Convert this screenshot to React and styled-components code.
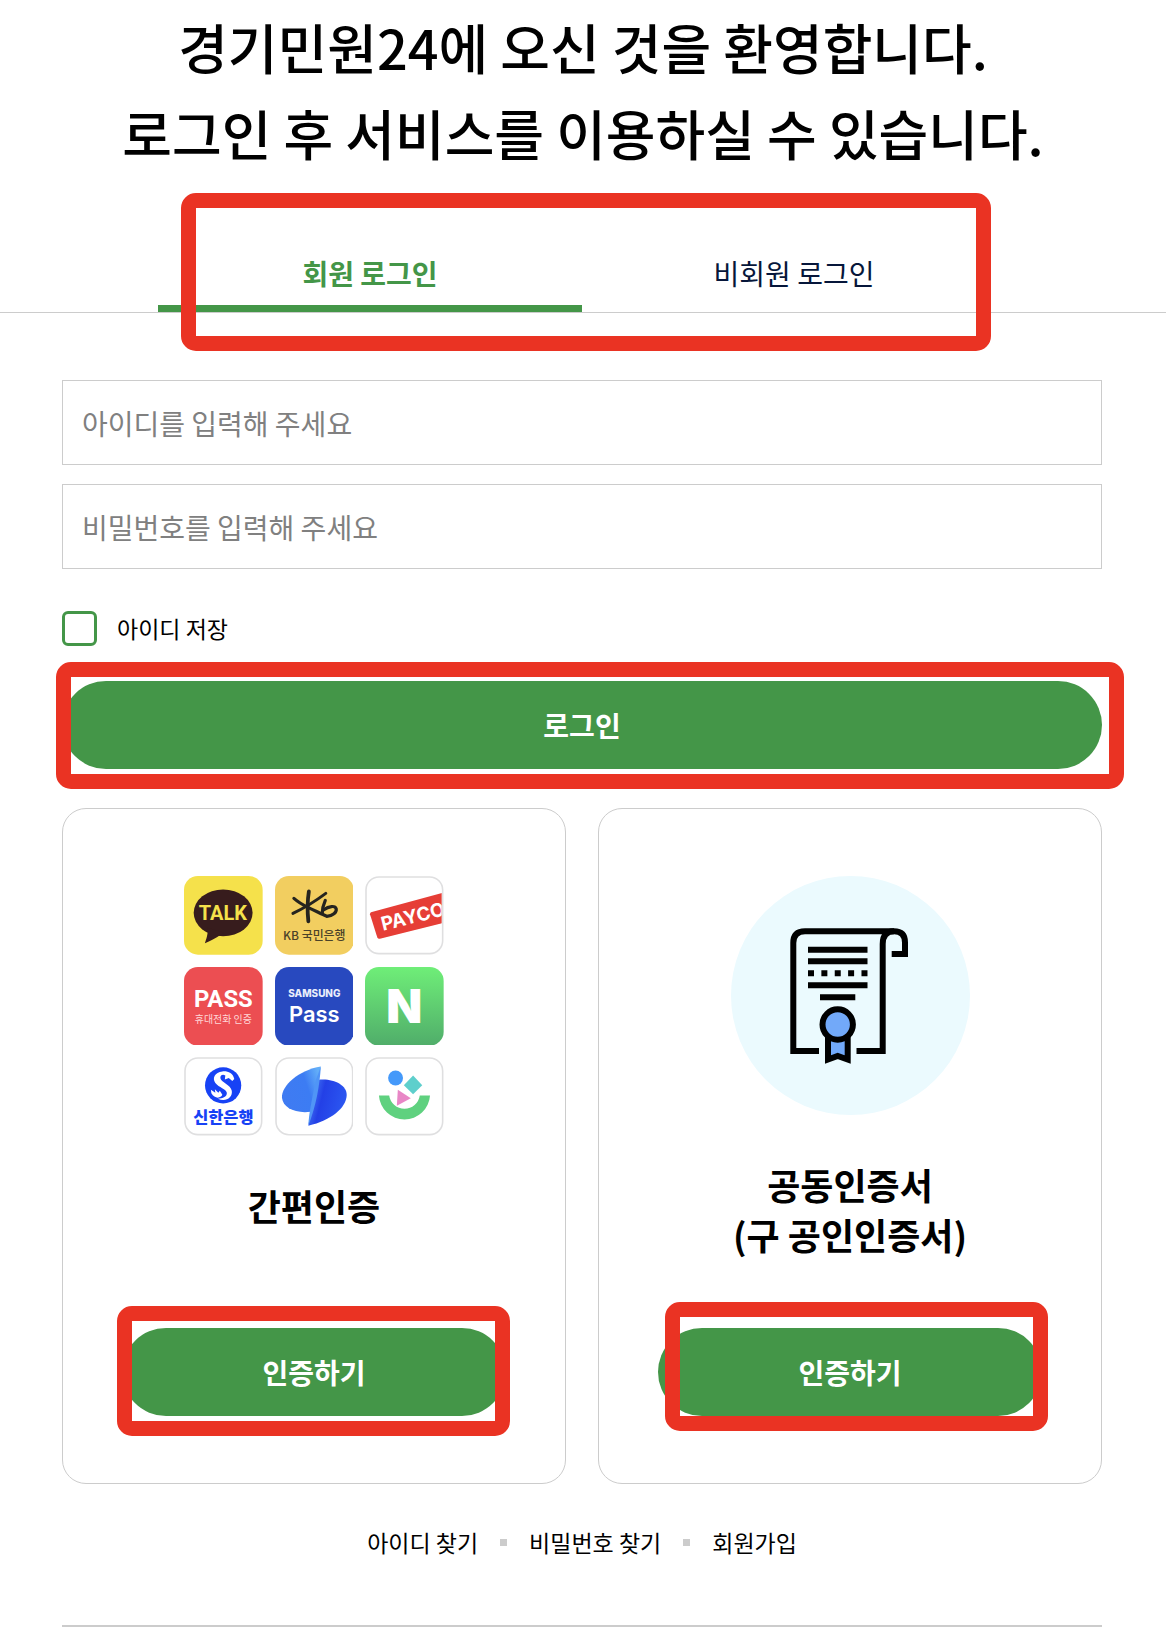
import React, { useState } from 'react';
import styled, { createGlobalStyle } from 'styled-components';

const GlobalStyle = createGlobalStyle`
  * {
    box-sizing: border-box;
  }

  body {
    margin: 0;
    background: #ffffff;
    color: #000000;
    font-family: "Noto Sans CJK KR", sans-serif;
  }

  button,
  input {
    font-family: inherit;
  }
`;

const Page = styled.main`
  padding-top: 4px;
`;

const Title = styled.h1`
  margin: 0 0 56px;
  font-size: 54px;
  font-weight: 500;
  line-height: 86px;
  text-align: center;
`;

const TabBar = styled.div`
  padding: 0 160px 0 158px;
  border-bottom: 1px solid #cccccc;
`;

const Tabs = styled.div`
  position: relative;
  display: flex;
`;

const Tab = styled.button`
  flex: 1;
  height: 80px;
  padding: 8px 0 0;
  border: none;
  border-bottom: 7px solid ${({ $active }) => ($active ? '#449648' : 'transparent')};
  background: none;
  color: ${({ $active }) => ($active ? '#449648' : '#06163a')};
  font-size: 28px;
  font-weight: ${({ $active }) => ($active ? 700 : 400)};
`;

const Marker = styled.span`
  position: absolute;
  z-index: 1;
  inset: ${({ $inset }) => $inset};
  border: 15px solid #ea3323;
  border-radius: 15px;
  pointer-events: none;
`;

const Content = styled.div`
  padding: 67px 64px 0 62px;
`;

const Fields = styled.form`
  display: flex;
  flex-direction: column;
  gap: 19px;
`;

const Field = styled.input`
  width: 100%;
  height: 85px;
  padding: 0 19px;
  border: 1px solid #cccccc;
  border-radius: 0;
  font-size: 28px;

  &::placeholder {
    color: #808080;
  }
`;

const SaveId = styled.label`
  display: flex;
  align-items: center;
  gap: 20px;
  margin: 23px 0 16px;
  font-size: 23px;
  line-height: 35px;
`;

const Checkbox = styled.input`
  appearance: none;
  width: 35px;
  height: 35px;
  margin: 0;
  border: 3px solid #449648;
  border-radius: 6px;

  &:checked {
    background: #449648;
  }
`;

const ButtonWrap = styled.div`
  position: relative;
  margin-top: auto;
`;

const Button = styled.button`
  display: block;
  width: 100%;
  height: 88px;
  border: none;
  border-radius: 44px;
  background: #449648;
  color: #ffffff;
  font-size: 28px;
  font-weight: 700;
`;

const Cards = styled.div`
  display: grid;
  grid-template-columns: 1fr 1fr;
  gap: 32px;
  margin-top: 39px;
`;

const Card = styled.section`
  display: flex;
  flex-direction: column;
  min-height: 676px;
  padding: 67px 59px;
  border: 1px solid #cccccc;
  border-radius: 24px;
`;

const CardTitle = styled.h2`
  margin: 44px 0 40px;
  font-size: 36px;
  font-weight: 700;
  line-height: 50px;
  text-align: center;
`;

const AppGrid = styled.div`
  display: grid;
  grid-template-columns: repeat(3, 1fr);
  gap: 12px;
  width: 260px;
  margin: 0 auto;

  svg {
    display: block;
    width: 100%;
  }
`;

const Certificate = styled.svg`
  display: block;
  width: 239px;
  height: 239px;
  margin: 0 auto;
`;

const Links = styled.nav`
  display: flex;
  justify-content: center;
  align-items: center;
  gap: 22px;
  margin: 41px 0 65px;
  line-height: 35px;
`;

const Link = styled.a`
  color: #000000;
  font-size: 23px;
  text-decoration: none;
`;

const Dot = styled.span`
  width: 7px;
  height: 7px;
  background: #cccccc;
`;

const Divider = styled.hr`
  margin: 0;
  border: none;
  border-top: 2px solid #cccccc;
`;

const Tile = ({ fill, outlined, children }) => (
  <svg viewBox="0 0 79 79" aria-hidden="true">
    {outlined
      ? <rect x="1" y="1" width="77" height="77" rx="13" fill="#ffffff" stroke="#dfdfe0" strokeWidth="1.6" />
      : <rect width="79" height="79" rx="14" fill={fill} />}
    {children}
  </svg>
);

const TalkIcon = () => (
  <Tile fill="#f5e14b">
    <ellipse cx="39.3" cy="37" rx="29.6" ry="23.5" fill="#371c1d" />
    <path d="M24 52 C24 59 22.5 63 21 67.5 C29 64 34 61 40 57 Z" fill="#371c1d" />
    <text x="39" y="44.5" textAnchor="middle" fontFamily="Roboto, sans-serif" fontWeight="700" fontSize="20" fill="#f5e14b">TALK</text>
  </Tile>
);

const KbIcon = () => (
  <Tile fill="#f2ce60">
    <g fill="none" stroke="#25241f" strokeLinecap="round">
      <path d="M34 15.5 C32.5 25 32.5 36 33.5 45.5" strokeWidth="3.8" />
      <path d="M51 17.5 C41 25 30 32 18 37.5" strokeWidth="3" />
      <path d="M19 22.5 C24 27 28 29 33 31.5 C40 34.5 46 38 52 40.5 C58 40 62 36.5 61.5 33 C60.5 29.5 54 30 49 34" strokeWidth="3.2" />
      <path d="M50.5 24.5 C48.5 29 47.5 33 47.5 37" strokeWidth="3.2" />
    </g>
    <text x="39.5" y="64" textAnchor="middle" fontFamily="Noto Sans CJK KR, sans-serif" fontWeight="500" fontSize="12" fill="#4b4229">KB 국민은행</text>
  </Tile>
);

const PaycoIcon = () => (
  <Tile outlined>
    <clipPath id="payco">
      <rect x="2" y="2" width="75" height="75" rx="12" />
    </clipPath>
    <g clipPath="url(#payco)">
      <path d="M6 36.5 L79 16.5 V47 L15 63 Q13 63.3 12.3 61.5 L5 38.5 Q5 37 6 36.5 Z" fill="#e63e36" />
      <text x="18" y="55" transform="rotate(-14 18 55)" fontFamily="Inter, sans-serif" fontWeight="700" fontSize="19" fill="#ffffff">PAYCO</text>
    </g>
  </Tile>
);

const PassIcon = () => (
  <Tile fill="#ec4e52">
    <text x="39.5" y="40" textAnchor="middle" fontFamily="Roboto, sans-serif" fontWeight="700" fontSize="24" fill="#ffffff">PASS</text>
    <text x="39.5" y="56" textAnchor="middle" fontFamily="Noto Sans CJK KR, sans-serif" fontSize="10" fill="#ffd8d8">휴대전화 인증</text>
  </Tile>
);

const SamsungIcon = () => (
  <Tile fill="#2849bf">
    <text x="39.5" y="30" textAnchor="middle" fontFamily="Inter, sans-serif" fontWeight="800" fontSize="10" fill="#e9edfb">SAMSUNG</text>
    <text x="39.5" y="55" textAnchor="middle" fontFamily="Inter, sans-serif" fontWeight="600" fontSize="22" fill="#ffffff">Pass</text>
  </Tile>
);

const NaverIcon = () => (
  <Tile fill="url(#naver)">
    <linearGradient id="naver" x1="0" y1="0" x2="0" y2="1">
      <stop offset="0" stopColor="#6fee78" />
      <stop offset="1" stopColor="#50ad6a" />
    </linearGradient>
    <text x="39.5" y="56" textAnchor="middle" fontFamily="Inter, sans-serif" fontWeight="900" fontSize="47" fill="#ffffff">N</text>
  </Tile>
);

const ShinhanIcon = () => (
  <Tile outlined>
    <circle cx="39.3" cy="28.5" r="18.2" fill="#1742f5" />
    <path d="M50.5 22 C49 16 44 14 38.5 14.5 C31 15.5 28 21 31.5 26 C35 30.5 42.5 32 43 36 C43.5 39.5 39 42 34 42 C42 45.5 49 41 48 34 C47 27.5 37 25.5 36.5 21 C36.5 18 39 17 41.5 18.5 L41 22.5 L45 21 L48.5 24 Z" fill="#ffffff" />
    <path d="M27 33 L31.5 36 L31 32.5 L34.5 36 L36 34 L38.5 38 C37 41.5 31 42.5 27.5 36.5 Z" fill="#ffffff" />
    <text x="39.5" y="66" textAnchor="middle" fontFamily="Noto Sans CJK KR, sans-serif" fontWeight="900" fontSize="16.5" fill="#1742f5">신한은행</text>
  </Tile>
);

const WingIcon = () => (
  <Tile outlined>
    <linearGradient id="wingLeft" x1="0" y1="0.7" x2="1" y2="0.3">
      <stop offset="0" stopColor="#3f7bf2" />
      <stop offset="0.65" stopColor="#3c7cf3" />
      <stop offset="1" stopColor="#63aef8" />
    </linearGradient>
    <linearGradient id="wingRight" x1="0" y1="0.3" x2="1" y2="0.6">
      <stop offset="0" stopColor="#4a7ff5" />
      <stop offset="0.35" stopColor="#2340e6" />
      <stop offset="1" stopColor="#2c59f2" />
    </linearGradient>
    <path d="M46 9.5 C24 13 6 29 7 41 C8 51 20 57 36 55 L40 44 Z" fill="url(#wingLeft)" />
    <path d="M43 23 C58 21 72 28 72 38 C72 51 56 64 33.5 69 C35 58 39 38 43 23 Z" fill="url(#wingRight)" />
    <path d="M46 9.5 C45 28 41 50 33.5 69 C34 56 38 38 41 23 Z" fill="#5095f6" />
  </Tile>
);

const SmileIcon = () => (
  <Tile outlined>
    <circle cx="30.7" cy="21" r="7.5" fill="#4499fa" />
    <path d="M48.3 18.7 L57.5 28.3 L48.3 37.5 L39 28.3 Z" fill="#5ecfcc" />
    <path d="M14 38.7 H24.3 A15.5 15.5 0 0 0 55 38.7 H65.3 A25.7 25.7 0 0 1 14 38.7 Z" fill="#5fd17f" />
    <path d="M33 33 L46 41.5 L32 49 Z" fill="#e887c6" />
  </Tile>
);

const CertificateIcon = () => (
  <Certificate viewBox="0 0 239 239" aria-hidden="true">
    <circle cx="119.5" cy="119.5" r="119.5" fill="#ebfafe" />
    <g fill="none" stroke="#000000" strokeWidth="6">
      <path d="M88 175 H62.3 V67 Q62.3 55.3 74 55.3 H163 Q174 55.3 174 66.5 V78 H160.7" />
      <path d="M163 55.3 Q151.7 55.3 151.7 68 V175 H125.5" />
      <path d="M77 73.7 H136.5 M77 85.3 H136.5 M77 109.3 H136.5 M89 121.3 H124.3" />
      <path d="M77 97.3 H136.5" strokeDasharray="6 7.37" />
      <path d="M97 160 V183.5 L106.7 180 L116.7 183.5 V160" fill="#72a9f9" />
      <circle cx="106.7" cy="148.5" r="15.2" fill="#72a9f9" />
    </g>
  </Certificate>
);

const App = () => {
  const [tab, setTab] = useState('member');

  return (
    <Page>
      <GlobalStyle />
      <Title>
        경기민원24에 오신 것을 환영합니다.
        <br />
        로그인 후 서비스를 이용하실 수 있습니다.
      </Title>
      <TabBar>
        <Tabs role="tablist">
          <Tab role="tab" aria-selected={tab === 'member'} $active={tab === 'member'} onClick={() => setTab('member')}>
            회원 로그인
          </Tab>
          <Tab role="tab" aria-selected={tab === 'guest'} $active={tab === 'guest'} onClick={() => setTab('guest')}>
            비회원 로그인
          </Tab>
          <Marker $inset="-39px 15px -39px 23px" />
        </Tabs>
      </TabBar>
      <Content>
        <Fields onSubmit={e => e.preventDefault()}>
          <Field type="text" aria-label="아이디" placeholder="아이디를 입력해 주세요" />
          <Field type="password" aria-label="비밀번호" placeholder="비밀번호를 입력해 주세요" />
          <SaveId>
            <Checkbox type="checkbox" />
            아이디 저장
          </SaveId>
          <ButtonWrap>
            <Button type="submit">로그인</Button>
            <Marker $inset="-19px -22px -20px -6px" />
          </ButtonWrap>
        </Fields>
        <Cards>
          <Card>
            <AppGrid>
              <TalkIcon />
              <KbIcon />
              <PaycoIcon />
              <PassIcon />
              <SamsungIcon />
              <NaverIcon />
              <ShinhanIcon />
              <WingIcon />
              <SmileIcon />
            </AppGrid>
            <CardTitle>간편인증</CardTitle>
            <ButtonWrap>
              <Button type="button">인증하기</Button>
              <Marker $inset="-22px -4px -20px -5px" />
            </ButtonWrap>
          </Card>
          <Card>
            <CertificateIcon />
            <CardTitle>
              공동인증서
              <br />
              (구 공인인증서)
            </CardTitle>
            <ButtonWrap>
              <Button type="button">인증하기</Button>
              <Marker $inset="-26px -6px -15px 7px" />
            </ButtonWrap>
          </Card>
        </Cards>
        <Links>
          <Link href="#find-id">아이디 찾기</Link>
          <Dot />
          <Link href="#find-password">비밀번호 찾기</Link>
          <Dot />
          <Link href="#join">회원가입</Link>
        </Links>
        <Divider />
      </Content>
    </Page>
  );
};

export default App;
